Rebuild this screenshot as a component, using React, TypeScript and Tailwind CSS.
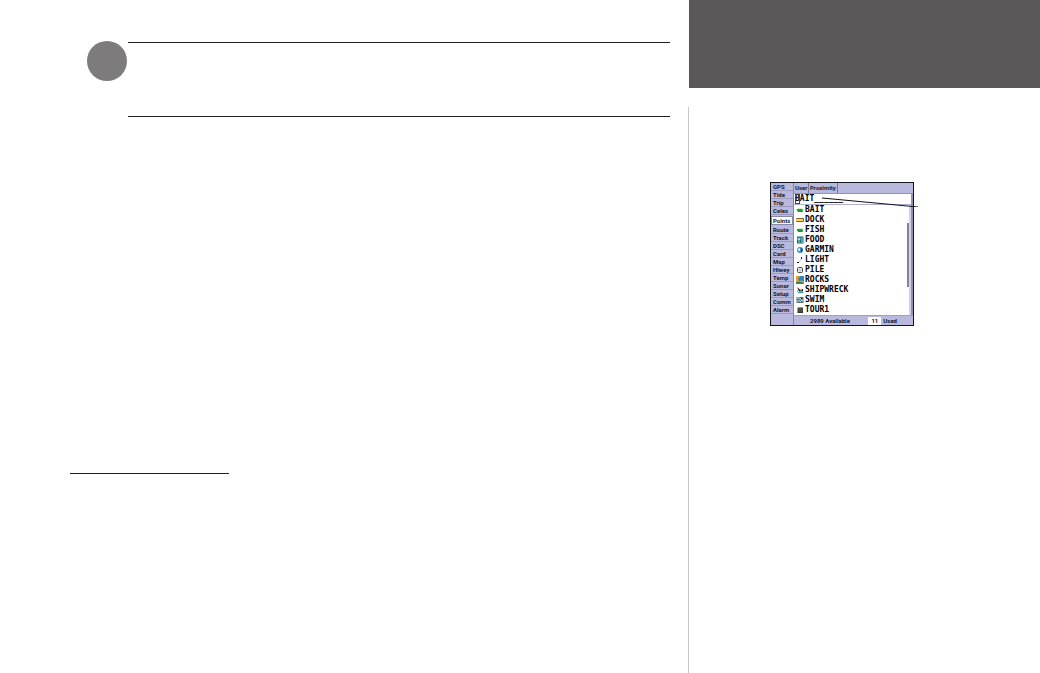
import React, { useState } from "react";

const pages = [
  "GPS", "Tide", "Trip", "Celes", "Points", "Route", "Track", "DSC",
  "Card", "Map", "Hiwey", "Temp", "Sonar", "Setup", "Comm", "Alarm",
];

const Fish = () => (
  <>
    <path d="M0 4 L2 2.5 H6 L8 4 L6 5.5 H2 Z" fill="#9be0a0" />
    <path d="M1 3 H6 L7 4 L6 5 H1 Z" fill="#18a832" />
    <path d="M2 5.5 H6 L7 5" stroke="#145c20" strokeWidth="0.8" fill="none" />
  </>
);

const points: { name: string; icon: React.ReactNode }[] = [
  { name: "BAIT", icon: <Fish /> },
  {
    name: "DOCK",
    icon: (
      <>
        <rect x="0" y="2" width="8" height="4" rx="1" fill="#7d6420" />
        <rect x="0" y="3" width="7" height="2" fill="#ffd75a" />
      </>
    ),
  },
  { name: "FISH", icon: <Fish /> },
  {
    name: "FOOD",
    icon: (
      <>
        <rect x="1" y="0.5" width="6.5" height="7" fill="#0f7077" />
        <path d="M3 1.5 V7 M2 2 V3.5 H4 V2 M6 1.5 V7" stroke="#c8f4f4" strokeWidth="0.8" fill="none" />
      </>
    ),
  },
  {
    name: "GARMIN",
    icon: (
      <>
        <circle cx="4" cy="4" r="3" fill="#3d8fc5" />
        <path d="M1.5 3 L4 2 L4 5 L2.5 5 Z" fill="#d9f3ff" />
        <path d="M5 1.5 L7 4 L5 7 Z" fill="#184b78" />
      </>
    ),
  },
  {
    name: "LIGHT",
    icon: (
      <>
        <path d="M3 6 L6 2" stroke="#999" strokeWidth="0.6" />
        <rect x="1" y="6" width="2" height="1" fill="#111" />
        <rect x="5" y="1" width="1" height="2" fill="#222" />
      </>
    ),
  },
  {
    name: "PILE",
    icon: (
      <>
        <rect x="1.5" y="1.5" width="5" height="5" rx="1" fill="#eee" stroke="#333" strokeWidth="0.9" />
        <circle cx="4" cy="4" r="1" fill="#fff" stroke="#888" strokeWidth="0.5" />
      </>
    ),
  },
  {
    name: "ROCKS",
    icon: (
      <>
        <rect x="0" y="0" width="8" height="8" fill="#258ac4" />
        <path d="M0 0 H4 L2 3 L3 5 L6 4.5 L8 6 V8 H0 Z" fill="#f0a020" />
        <path d="M0 6 L4 5.5 L8 7 V8 H0 Z" fill="#4d7a52" />
      </>
    ),
  },
  {
    name: "SHIPWRECK",
    icon: (
      <>
        <path d="M1 1 L4 3.5 L7 3 V5.5 H3 Z" fill="#272727" />
        <path d="M1 4 L3 5 L1 6 Z" fill="#e58b22" />
        <path d="M2 6.5 H7.5" stroke="#3a9ad0" />
        <rect x="4" y="3" width="2" height="1.5" fill="#e5a040" />
      </>
    ),
  },
  {
    name: "SWIM",
    icon: (
      <>
        <rect x="0.5" y="1" width="7" height="6" fill="#55757d" />
        <path d="M1 2 H4 L6 5 L7 4 M1 5.5 L3 4.5 L5 6" stroke="#e2ffff" strokeWidth="0.8" fill="none" />
        <rect x="5" y="2" width="1" height="1" fill="#111" />
      </>
    ),
  },
  {
    name: "TOUR1",
    icon: (
      <>
        <rect x="1.5" y="1.5" width="5.5" height="5.5" fill="#333" />
        <path d="M2 3 H6.5 M2 5 H6.5" stroke="#888" strokeWidth="0.6" />
      </>
    ),
  },
];

function PointsScreen() {
  const [query, setQuery] = useState("BAIT______");
  return (
    <div className="relative flex h-36 w-36 border border-[#15151c] bg-[#b9b9dd] font-['Roboto','Liberation_Sans',sans-serif] text-[6px] leading-[8px] font-bold text-[#17172a]">
      <nav className="flex w-[22px] shrink-0 flex-col">
        {pages.map((page) =>
          page === "Points" ? (
            <button key={page} type="button" aria-current="page" className="my-px h-[9px] border border-[#8888ad] bg-white pl-px text-left whitespace-nowrap">
              {page}
            </button>
          ) : (
            <button key={page} type="button" className="h-2 border-b border-[#9b9bc0] pl-[2px] text-left whitespace-nowrap">
              {page}
            </button>
          ),
        )}
      </nav>
      <div className="flex min-w-0 flex-1 flex-col border-l border-[#8585a8]">
        <div className="flex h-[10px] shrink-0 leading-[10px]">
          <button type="button" className="w-[15px] border-r border-[#77779a] pl-px text-left">User</button>
          <button type="button" className="border-r border-[#77779a] px-px">Proximity</button>
        </div>
        <div className="flex min-h-0 flex-1 flex-col border-t border-r-2 border-[#9292b6] bg-white">
          <div className="relative flex h-[11px] shrink-0 border-b border-[#b0b0d2]">
            <input
              aria-label="Waypoint name"
              value={query}
              onChange={(e) => setQuery(e.target.value)}
              className="w-full bg-white px-px font-['DejaVu_Sans_Mono',monospace] text-[8px] leading-[10px] font-bold text-black outline-none"
            />
            <span className="absolute top-0 left-px h-[10px] w-[5px] border border-[#444]" />
          </div>
          <div className="flex min-h-0 flex-1">
            <ul className="flex-1 pl-[2px]">
              {points.map(({ name, icon }) => (
                <li key={name} className="flex h-[10px] items-center gap-px font-['DejaVu_Sans_Mono',monospace] text-[8px] leading-[10px] text-black">
                  <svg viewBox="0 0 8 8" className="size-2 shrink-0" aria-hidden="true">{icon}</svg>
                  {name}
                </li>
              ))}
            </ul>
            <div className="w-[2px] bg-[#85858f] bg-clip-content pt-[18px] pb-7" />
            <div className="w-[2px] bg-[#d2d2ee]" />
          </div>
        </div>
        <div className="flex h-[10px] shrink-0 items-center border-t border-[#a0a0c4] pl-4">
          <span className="flex-1 whitespace-nowrap">2989 Available</span>
          <span className="w-[13px] bg-white text-center">11</span>
          <span className="pr-4 pl-[2px]">Used</span>
        </div>
      </div>
      <svg viewBox="0 0 98 12" className="absolute top-3 left-[50px] h-3 w-[98px]" aria-hidden="true">
        <path d="M1 3 L97 12" stroke="#111" strokeWidth="1" />
      </svg>
    </div>
  );
}

export default function App() {
  return (
    <div className="flex min-h-screen bg-white">
      <main className="flex-1 pr-[18px] pl-[70px]">
        <header className="flex pt-[41px] pl-[17px]">
          <div className="size-10 shrink-0 rounded-full bg-[#7d7b7c]" />
          <div className="mt-px ml-px h-[75px] flex-1 border-y border-[#231f20]" />
        </header>
        <hr className="mt-[356px] w-[159px] border-t border-[#231f20]" />
      </main>
      <aside className="flex w-[352px] shrink-0 flex-col">
        <div className="ml-px h-[88px] bg-[#5a5859]" />
        <div className="mt-[19px] flex-1 border-l border-[#c7c8ca] pt-[75px] pl-[81px]">
          <PointsScreen />
        </div>
      </aside>
    </div>
  );
}
